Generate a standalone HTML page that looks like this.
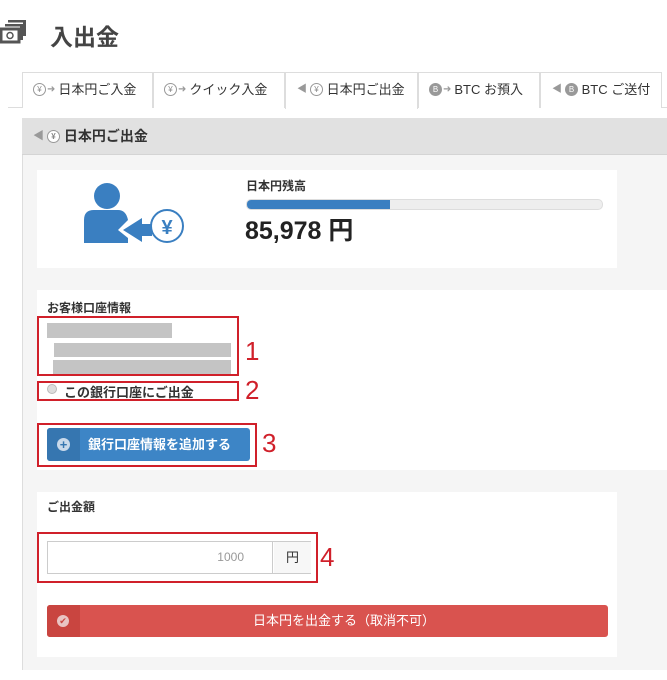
<!DOCTYPE html>
<html><head><meta charset="utf-8"><style>
*{margin:0;padding:0;box-sizing:border-box}
body{width:667px;height:680px;background:#fff;position:relative;overflow:hidden;font-family:"Liberation Sans","Noto Sans CJK JP",sans-serif;color:#333}
.a{position:absolute}
.tab{position:absolute;top:72px;height:36px;border:1px solid #ddd;border-bottom:none;background:#fff;font-size:13px;line-height:34px;padding-left:10px;color:#333;white-space:nowrap}
.ic{display:inline-block;width:13px;height:13px;border-radius:50%;border:1px solid #999;vertical-align:middle;font-size:8px;line-height:11px;text-align:center;color:#888;margin-top:-2px}
.icf{background:#999;border-color:#999;color:#fff}
.ar{color:#999;font-size:10px;margin:0 3px 0 1px;vertical-align:middle;position:relative;top:-1px}
.red{position:absolute;border:2px solid #d0202a}
.num{position:absolute;color:#d0202a;font-size:26px;line-height:26px}
.bar{position:absolute;background:#c4c4c4}
</style></head><body>
<svg class="a" style="left:0;top:18px" width="28" height="28" viewBox="0 0 28 28"><rect x="8" y="2" width="18" height="2.5" fill="#555"/><rect x="5" y="6" width="18" height="2.5" fill="#555"/><rect x="23" y="2" width="3" height="16" fill="#555"/><rect x="20" y="6" width="3" height="16" fill="#555"/><rect x="1" y="11" width="18" height="13" fill="none" stroke="#555" stroke-width="3"/><circle cx="10" cy="17.5" r="3" fill="none" stroke="#555" stroke-width="1.5"/></svg>
<div class="a" style="left:50px;top:18px;font-size:23px;font-weight:bold;color:#444">入出金</div>
<div class="a" style="left:8px;top:107px;width:659px;height:1px;background:#ddd"></div>
<div class="tab" style="left:22px;width:131px"><span class="ic">¥</span><span class="ar">➜</span>日本円ご入金</div>
<div class="tab" style="left:153px;width:132px"><span class="ic">¥</span><span class="ar">➜</span>クイック入金</div>
<div class="tab" style="left:285px;width:133px;height:37px;background:#fff"><span class="ar">◀</span><span class="ic">¥</span> 日本円ご出金</div>
<div class="tab" style="left:418px;width:122px"><span class="ic icf">B</span><span class="ar">➜</span>BTC お預入</div>
<div class="tab" style="left:540px;width:122px"><span class="ar">◀</span><span class="ic icf">B</span> BTC ご送付</div>
<div class="a" style="left:22px;top:118px;width:645px;height:552px;background:#f5f5f5;border-left:1px solid #ddd"></div>
<div class="a" style="left:22px;top:118px;width:645px;height:37px;background:#e1e1e1;border-bottom:1px solid #d4d4d4;font-size:14px;font-weight:bold;line-height:36px;padding-left:10px;color:#333"><span class="ar" style="font-size:11px">◀</span><span class="ic" style="background:#fff">¥</span> 日本円ご出金</div>
<div class="a" style="left:37px;top:170px;width:580px;height:98px;background:#fff"></div>
<svg class="a" style="left:80px;top:180px" width="110" height="68" viewBox="0 0 110 68"><circle cx="27" cy="16" r="13" fill="#3a7fc1"/><path d="M4 63 V40 Q4 30 14 30 H38 Q46 30 48 40 L38 50 L48 58 V63 Z" fill="#3a7fc1"/><path d="M43 50 L62 38 V44 H72 V56 H62 V62 Z" fill="#3a7fc1"/><circle cx="87" cy="46" r="16" fill="#fff" stroke="#3a7fc1" stroke-width="2"/><text x="87" y="54" font-size="20" font-weight="bold" fill="#3a7fc1" text-anchor="middle" font-family="Liberation Sans">¥</text></svg>
<div class="a" style="left:246px;top:177px;font-size:12px;font-weight:bold">日本円残高</div>
<div class="a" style="left:246px;top:199px;width:357px;height:11px;border-radius:5px;background:#eee;border:1px solid #ddd;overflow:hidden"><div style="width:143px;height:100%;background:#3a7fc1"></div></div>
<div class="a" style="left:245px;top:211px;font-size:25px;font-weight:bold;color:#222">85,978 円</div>
<div class="a" style="left:37px;top:290px;width:630px;height:180px;background:#fff"></div>
<div class="a" style="left:47px;top:299px;font-size:12px;font-weight:bold">お客様口座情報</div>
<div class="bar" style="left:47px;top:323px;width:125px;height:15px"></div>
<div class="bar" style="left:54px;top:343px;width:177px;height:14px"></div>
<div class="bar" style="left:53px;top:360px;width:178px;height:14px"></div>
<div class="red" style="left:37px;top:316px;width:202px;height:60px"></div>
<div class="num" style="left:245px;top:338px">1</div>
<div class="a" style="left:47px;top:384px;width:10px;height:10px;border-radius:50%;background:#ddd;border:1px solid #bbb"></div>
<div class="a" style="left:64px;top:382px;font-size:13px;font-weight:bold;color:#333">この銀行口座にご出金</div>
<div class="red" style="left:37px;top:381px;width:202px;height:20px"></div>
<div class="num" style="left:245px;top:377px">2</div>
<div class="a" style="left:47px;top:428px;width:203px;height:33px;background:#3d85c6;border-radius:3px;overflow:hidden"><div style="position:absolute;left:0;top:0;width:33px;height:33px;background:#3676b0"></div><div style="position:absolute;left:10px;top:10px;width:13px;height:13px;border-radius:50%;background:#c9d9ea;color:#3676b0;font-size:13px;line-height:13px;text-align:center;font-weight:bold">+</div><div style="position:absolute;left:41px;top:0;line-height:33px;color:#fff;font-size:13px;font-weight:bold">銀行口座情報を追加する</div></div>
<div class="red" style="left:37px;top:423px;width:220px;height:44px"></div>
<div class="num" style="left:262px;top:430px">3</div>
<div class="a" style="left:37px;top:492px;width:580px;height:165px;background:#fff"></div>
<div class="a" style="left:47px;top:498px;font-size:12px;font-weight:bold">ご出金額</div>
<div class="a" style="left:47px;top:541px;width:264px;height:33px;border:1px solid #ccc"><div style="position:absolute;left:0;top:0;width:225px;height:31px;border-right:1px solid #ccc;text-align:right;padding-right:28px;line-height:31px;font-size:12px;color:#999">1000</div><div style="position:absolute;left:226px;top:0;width:37px;height:31px;background:#f7f7f7;text-align:center;line-height:31px;font-size:13px">円</div></div>
<div class="red" style="left:37px;top:532px;width:281px;height:51px"></div>
<div class="num" style="left:320px;top:544px">4</div>
<div class="a" style="left:47px;top:605px;width:561px;height:32px;background:#d9534f;border-radius:3px;overflow:hidden"><div style="position:absolute;left:0;top:0;width:33px;height:32px;background:#c94540"></div><div style="position:absolute;left:10px;top:10px;width:12px;height:12px;border-radius:50%;background:#e9c4c3;color:#c94540;font-size:9px;line-height:12px;text-align:center">✔</div><div style="position:absolute;left:33px;right:0;top:0;line-height:32px;color:#fff;font-size:13px;text-align:center">日本円を出金する（取消不可）</div></div>
</body></html>
